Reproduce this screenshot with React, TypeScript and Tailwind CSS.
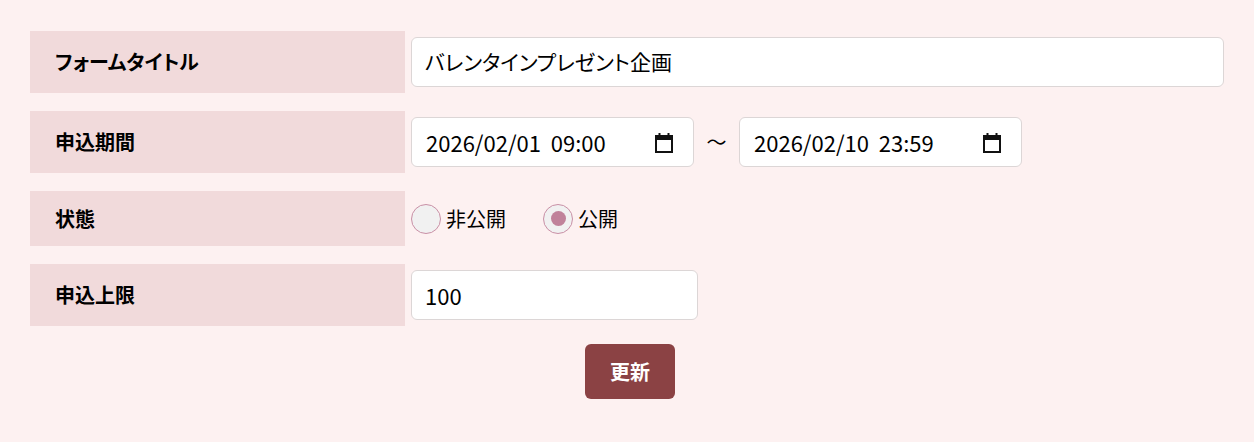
import React from 'react';

const font = { fontFamily: '"Noto Sans CJK JP", "Noto Sans", sans-serif' };

const CalendarIcon = () => (
  <svg width="20" height="21" viewBox="0 0 20 21" aria-hidden="true">
    <rect x="2" y="4" width="16" height="16" fill="none" stroke="#111" strokeWidth="2" />
    <rect x="2" y="4" width="16" height="4" fill="#111" />
    <rect x="4.5" y="1" width="2" height="4" fill="#111" />
    <rect x="13.5" y="1" width="2" height="4" fill="#111" />
  </svg>
);

const Row = ({ label, h, children }: { label: string; h: string; children: React.ReactNode }) => (
  <div className={`flex items-center gap-[6px] ${h}`}>
    <div className="w-[375px] h-full shrink-0 flex items-center pl-[25px] bg-[#f1dadb] font-bold text-[20px] text-black [font-feature-settings:'palt']">
      {label}
    </div>
    {children}
  </div>
);

const DateBox = ({ value }: { value: string }) => (
  <div className="w-[283px] h-[50px] flex items-center justify-between pl-[14px] pr-[19px] bg-white border border-[#dcd6d6] rounded-[6px] text-[22px] text-black">
    <span className="whitespace-pre">{value}</span>
    <CalendarIcon />
  </div>
);

const Radio = ({ label, checked }: { label: string; checked?: boolean }) => (
  <label className="flex items-center gap-[5px] text-[20px] text-black">
    <span className="w-[30px] h-[30px] rounded-full border border-[#c990a6] bg-[#f1f1f1] flex items-center justify-center">
      {checked && <span className="w-[15px] h-[15px] rounded-full bg-[#c0829a]" />}
    </span>
    {label}
  </label>
);

export default function App() {
  return (
    <div className="w-[1254px] h-[442px] bg-[#fdf1f1] px-[30px] pt-[31px]" style={font}>
      <div className="flex flex-col gap-[18px]">
        <Row label="フォームタイトル" h="h-[62px]">
          <div className="flex-1 h-[50px] flex items-center px-[13px] bg-white border border-[#dcd6d6] rounded-[6px] text-[21px] text-black [font-feature-settings:'palt']">
            バレンタインプレゼント企画
          </div>
        </Row>
        <Row label="申込期間" h="h-[62px]">
          <DateBox value="2026/02/01  09:00" />
          <span className="w-[33px] text-center text-[20px] text-black">～</span>
          <DateBox value="2026/02/10  23:59" />
        </Row>
        <Row label="状態" h="h-[55px]">
          <div className="flex items-center gap-[37px]">
            <Radio label="非公開" />
            <Radio label="公開" checked />
          </div>
        </Row>
        <Row label="申込上限" h="h-[62px]">
          <div className="w-[287px] h-[50px] flex items-center px-[13px] bg-white border border-[#dcd6d6] rounded-[6px] text-[22px] text-black">
            100
          </div>
        </Row>
      </div>
      <div className="flex justify-center mt-[18px] pl-[6px]">
        <button className="w-[90px] h-[55px] rounded-[6px] bg-[#8b4244] text-white font-bold text-[20px]">
          更新
        </button>
      </div>
    </div>
  );
}
